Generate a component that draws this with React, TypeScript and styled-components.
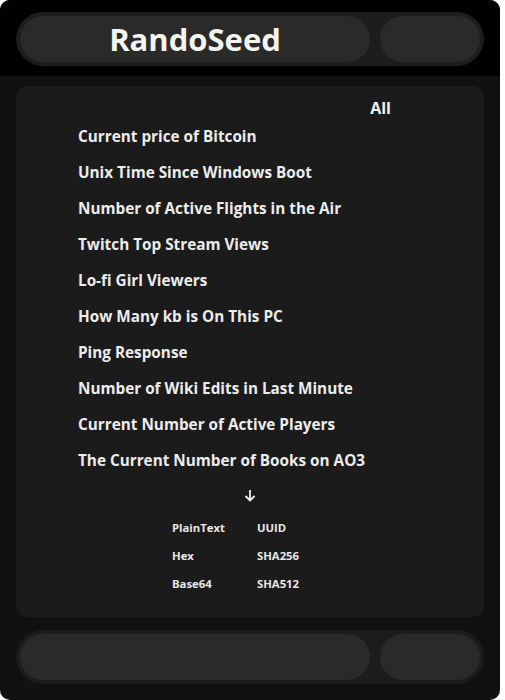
import React from "react";
import styled, { createGlobalStyle } from "styled-components";

const Global = createGlobalStyle`
  html, body { margin: 0; padding: 0; background: #ffffff; }
  body { font-family: "Open Sans", "Noto Sans", sans-serif; }
`;

const Shell = styled.div`
  width: 500px;
  height: 700px;
  border-radius: 10px;
  overflow: hidden;
  background: #111111;
  display: flex;
  flex-direction: column;
`;

const Header = styled.header`
  background: #000000;
  padding: 12px 16px 10px;
`;

const Bar = styled.div`
  height: 54px;
  box-sizing: border-box;
  padding: 4px;
  border-radius: 27px;
  background: #1d1d1d;
  display: flex;
  gap: 10px;
`;

const Pill = styled.div<{ $grow?: boolean }>`
  flex: ${(p) => (p.$grow ? "1 1 auto" : "0 0 100px")};
  height: 46px;
  border-radius: 23px;
  background: #2a2a2a;
  display: flex;
  align-items: center;
  justify-content: center;
`;

const Title = styled.h1`
  margin: 0;
  font-family: "Open Sans", sans-serif;
  font-weight: 700;
  font-size: 31px;
  color: #f4f4ef;
`;

const Main = styled.main`
  flex: 1;
  display: flex;
  flex-direction: column;
  padding: 10px 16px 16px;
  gap: 13px;
`;

const Card = styled.section`
  height: 531px;
  border-radius: 12px;
  background: #1b1b1b;
  box-sizing: border-box;
  padding: 12px 0 0 62px;
  display: flex;
  flex-direction: column;
`;

const FilterRow = styled.div`
  display: flex;
  justify-content: flex-end;
  padding-right: 93px;
  height: 20px;
  align-items: center;
`;

const Filter = styled.span`
  font-weight: 700;
  font-size: 16px;
  color: #f2f2f2;
`;

const List = styled.ul`
  list-style: none;
  margin: 0;
  padding: 0;
  display: flex;
  flex-direction: column;
`;

const Item = styled.li`
  height: 36px;
  display: flex;
  align-items: center;
  font-weight: 700;
  font-size: 15.3px;
  color: #ececec;
`;

const ArrowRow = styled.div`
  display: flex;
  justify-content: center;
  margin: 5px 0 0 -62px;
  height: 24px;
  align-items: center;
`;

const Formats = styled.div`
  display: grid;
  grid-template-columns: 85px 85px;
  grid-auto-rows: 28px;
  margin: 6px 0 0 94px;
  align-items: center;
`;

const Format = styled.span`
  font-weight: 700;
  font-size: 11.3px;
  color: #e8e8e8;
`;

const Footer = styled(Bar)`
  background: #1c1c1c;
`;

const items = [
  "Current price of Bitcoin",
  "Unix Time Since Windows Boot",
  "Number of Active Flights in the Air",
  "Twitch Top Stream Views",
  "Lo-fi Girl Viewers",
  "How Many kb is On This PC",
  "Ping Response",
  "Number of Wiki Edits in Last Minute",
  "Current Number of Active Players",
  "The Current Number of Books on AO3",
];

const formats = ["PlainText", "UUID", "Hex", "SHA256", "Base64", "SHA512"];

export default function App() {
  return (
    <>
      <Global />
      <Shell>
        <Header>
          <Bar>
            <Pill $grow>
              <Title>RandoSeed</Title>
            </Pill>
            <Pill />
          </Bar>
        </Header>
        <Main>
          <Card>
            <FilterRow>
              <Filter>All</Filter>
            </FilterRow>
            <List>
              {items.map((t) => (
                <Item key={t}>{t}</Item>
              ))}
            </List>
            <ArrowRow>
              <svg width="12" height="13" viewBox="0 0 12 13" fill="none">
                <path d="M6 1v10.5M1.5 7L6 11.5 10.5 7" stroke="#f0f0f0" strokeWidth="1.8" />
              </svg>
            </ArrowRow>
            <Formats>
              {formats.map((f) => (
                <Format key={f}>{f}</Format>
              ))}
            </Formats>
          </Card>
          <Footer>
            <Pill $grow />
            <Pill />
          </Footer>
        </Main>
      </Shell>
    </>
  );
}
